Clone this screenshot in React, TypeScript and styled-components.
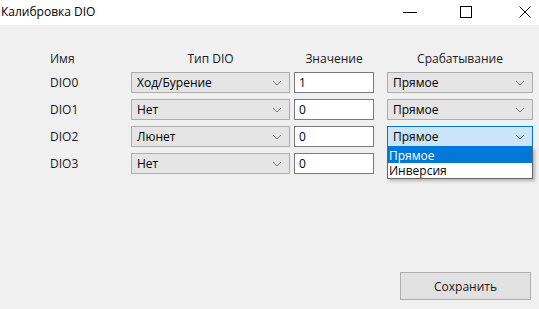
import React from 'react';
import styled, { createGlobalStyle } from 'styled-components';

const GlobalStyle = createGlobalStyle`
  html, body { margin: 0; padding: 0; }
  body {
    width: 539px;
    height: 309px;
    overflow: hidden;
    font-family: 'Open Sans', 'Noto Sans', sans-serif;
    font-size: 12px;
    color: #000;
  }
`;

const rows = [
  { name: 'DIO0', type: 'Ход/Бурение', value: '1', mode: 'Прямое' },
  { name: 'DIO1', type: 'Нет', value: '0', mode: 'Прямое' },
  { name: 'DIO2', type: 'Люнет', value: '0', mode: 'Прямое', open: true },
  { name: 'DIO3', type: 'Нет', value: '0', mode: '' },
];

function Chevron() {
  return (
    <svg width="10" height="6" viewBox="0 0 10 6">
      <path d="M1 1 L5 5 L9 1" fill="none" stroke="#7a7a7a" strokeWidth="1" />
    </svg>
  );
}

function App() {
  return (<>
    <GlobalStyle />
    <Window>
      <TitleBar>
        <Title>Калибровка DIO</Title>
        <Controls>
          <CtrlButton>
            <svg width="14" height="14" viewBox="0 0 14 14">
              <path d="M0 7.5 H14" stroke="#000" strokeWidth="1" />
            </svg>
          </CtrlButton>
          <CtrlButton $gap={42}>
            <svg width="14" height="14" viewBox="0 0 14 14">
              <rect x="1.5" y="1.5" width="11" height="11" fill="none" stroke="#000" strokeWidth="1" />
            </svg>
          </CtrlButton>
          <CtrlButton $gap={45}>
            <svg width="14" height="14" viewBox="0 0 14 14">
              <path d="M1.5 1.5 L12.5 12.5 M12.5 1.5 L1.5 12.5" stroke="#000" strokeWidth="1" />
            </svg>
          </CtrlButton>
        </Controls>
      </TitleBar>

      <Body>
        <Table>
          <Header $align="left">Имя</Header>
          <Header>Тип DIO</Header>
          <Header>Значение</Header>
          <Header $shift>Срабатывание</Header>

          {rows.map((r) => (
            <React.Fragment key={r.name}>
              <Name>{r.name}</Name>
              <Combo>
                <span>{r.type}</span>
                <Chevron />
              </Combo>
              <Field>{r.value}</Field>
              <ModeCell>
                {r.mode && (
                  <Combo $focused={r.open}>
                    <span>{r.mode}</span>
                    <Chevron />
                  </Combo>
                )}
                {r.open && (
                  <DropList>
                    <DropItem $selected>Прямое</DropItem>
                    <DropItem>Инверсия</DropItem>
                  </DropList>
                )}
              </ModeCell>
            </React.Fragment>
          ))}
        </Table>

        <Footer>
          <SaveButton>Сохранить</SaveButton>
        </Footer>
      </Body>
    </Window>
  </>);
}

export default App;

const Window = styled.div`
  width: 539px;
  height: 309px;
  display: flex;
  flex-direction: column;
  background: #f0f0f0;
`

const TitleBar = styled.div`
  height: 25px;
  flex: none;
  display: flex;
  align-items: center;
  justify-content: space-between;
  background: #fff;
`

const Title = styled.div`
  padding-left: 1px;
  font-size: 12px;
  margin-top: -3px;
`

const Controls = styled.div`
  display: flex;
  align-items: center;
  height: 100%;
  padding-right: 7px;
  margin-top: -2px;
`

const CtrlButton = styled.div<{ $gap?: number }>`
  width: 14px;
  height: 14px;
  display: flex;
  margin-left: ${(p) => p.$gap || 0}px;
`

const Body = styled.div`
  flex: 1;
  display: flex;
  flex-direction: column;
  padding: 26px 0 9px 50px;
`

const Table = styled.div`
  display: grid;
  grid-template-columns: 77px 159px 80px 155px;
  grid-auto-rows: 21px;
  grid-template-rows: 15px;
  column-gap: 4px;
  row-gap: 6px;
  align-items: center;
`

const Header = styled.div<{ $align?: string; $shift?: boolean }>`
  text-align: ${(p) => p.$align || 'center'};
  padding-left: ${(p) => (p.$shift ? '9px' : '0')};
  color: #1a1a1a;
  white-space: nowrap;
`

const Name = styled.div`
  color: #1a1a1a;
`

const Combo = styled.div<{ $focused?: boolean }>`
  box-sizing: border-box;
  height: 21px;
  display: flex;
  align-items: center;
  justify-content: space-between;
  padding: 0 7px 0 5px;
  background: ${(p) => (p.$focused ? '#cce4f7' : '#e5e5e5')};
  border: 1px solid ${(p) => (p.$focused ? '#0078d7' : '#adadad')};
  white-space: nowrap;
`

const Field = styled.div`
  box-sizing: border-box;
  height: 21px;
  display: flex;
  align-items: center;
  padding-left: 4px;
  background: #fff;
  border: 1px solid #7a7a7a;
`

const ModeCell = styled.div`
  position: relative;
  padding-left: 9px;
  height: 21px;
`

const DropList = styled.div`
  position: absolute;
  top: 21px;
  left: 9px;
  right: 0;
  box-sizing: border-box;
  background: #fff;
  border: 1px solid #646464;
  box-shadow: 2px 2px 3px rgba(0, 0, 0, 0.25);
  z-index: 2;
`

const DropItem = styled.div<{ $selected?: boolean }>`
  height: 15px;
  line-height: 15px;
  padding-left: 1px;
  background: ${(p) => (p.$selected ? '#0078d7' : '#fff')};
  color: ${(p) => (p.$selected ? '#fff' : '#000')};
`

const Footer = styled.div`
  margin-top: auto;
  display: flex;
  justify-content: flex-end;
  padding-right: 8px;
`

const SaveButton = styled.div`
  box-sizing: border-box;
  width: 131px;
  height: 28px;
  display: flex;
  align-items: center;
  justify-content: center;
  background: #e1e1e1;
  border: 1px solid #adadad;
  color: #1a1a1a;
`
